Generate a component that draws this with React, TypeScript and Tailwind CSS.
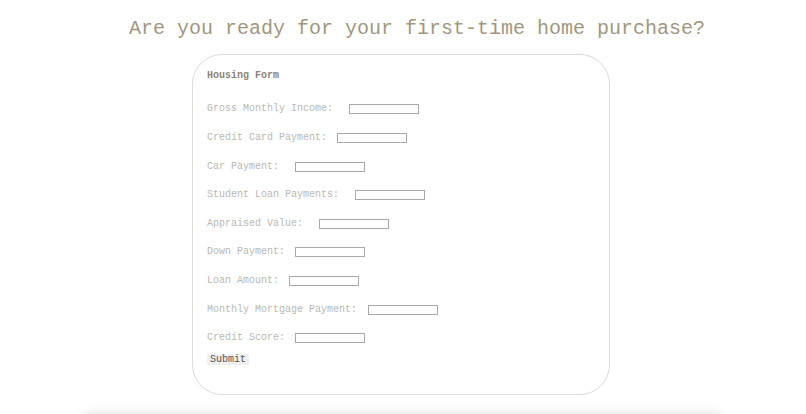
const fields = [
  { label: "Gross Monthly Income:", gap: "ml-[16px]" },
  { label: "Credit Card Payment:", gap: "ml-[10px]" },
  { label: "Car Payment:", gap: "ml-[16px]" },
  { label: "Student Loan Payments:", gap: "ml-[16px]" },
  { label: "Appraised Value:", gap: "ml-[16px]" },
  { label: "Down Payment:", gap: "ml-[10px]" },
  { label: "Loan Amount:", gap: "ml-[10px]" },
  { label: "Monthly Mortgage Payment:", gap: "ml-[11px]" },
  { label: "Credit Score:", gap: "ml-[10px]" },
];

export default function App() {
  return (
    <div
      className="h-[414px] bg-white overflow-hidden"
      style={{ fontFamily: '"Liberation Mono", "Courier New", monospace' }}
    >
      <h1 className="pt-[15px] pl-[28px] text-center text-[20px] leading-[28px] text-[#a0977f] font-normal">
        Are you ready for your first-time home purchase?
      </h1>

      <div className="ml-[192px] mt-[11px] w-[418px] h-[341px] rounded-[30px] border border-[#dedbd5] pl-[14px] pt-[15px]">
        <h2 className="text-[10px] leading-[12px] font-bold text-[#8d8474]">
          Housing Form
        </h2>
        <form className="mt-[13px]" onSubmit={(e) => e.preventDefault()}>
          {fields.map((f) => (
            <div key={f.label} className="flex items-center h-[28.625px]">
              <label className="text-[10px] leading-[12px] text-[#bab8b1] whitespace-pre">
                {f.label}
              </label>
              <input
                type="text"
                className={`${f.gap} w-[70px] h-[10px] border border-[#a8a8a8] bg-white outline-none`}
              />
            </div>
          ))}
          <button
            type="submit"
            className="block mt-[1px] h-[11px] px-[3px] bg-[#efefef] text-[10px] leading-[11px] text-[#555] rounded-[1px]"
          >
            Submit
          </button>
        </form>
      </div>

      <div className="mx-[76px] mt-[20px] h-[40px] rounded-t-[20px] bg-white shadow-[0_-1px_12px_rgba(0,0,0,0.14)]" />
    </div>
  );
}
